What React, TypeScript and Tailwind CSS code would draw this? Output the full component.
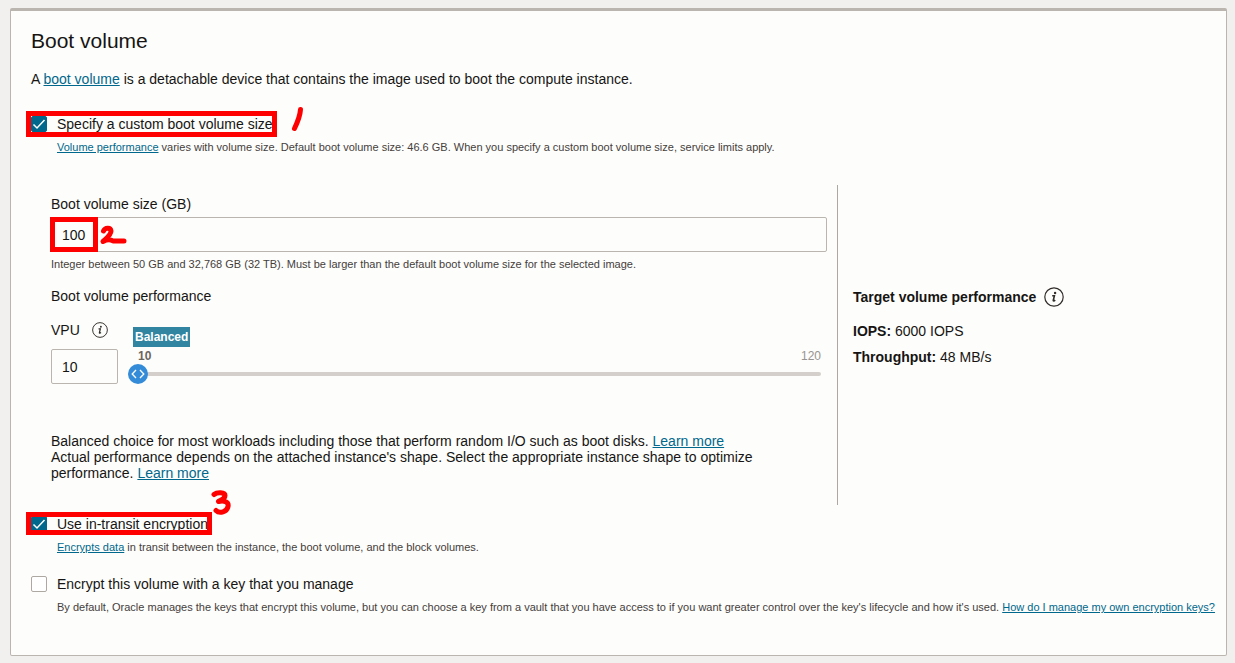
import { useState, type ReactNode } from "react";

function TextLink({ children }: { children: ReactNode }) {
  return (
    <a href="#" className="text-[#00688c] underline underline-offset-1">
      {children}
    </a>
  );
}

function InfoButton({ label, className }: { label: string; className: string }) {
  return (
    <button type="button" aria-label={label} className="shrink-0 text-[#312d2a]">
      <svg viewBox="0 0 20 20" className={className} fill="none" stroke="currentColor">
        <circle cx="10" cy="10" r="9.2" strokeWidth="1.2" />
        <circle cx="11.100" cy="6" r="1.2" fill="currentColor" stroke="none" />
        <path d="M8.200 8.700h2.200L9.300 13.300c-.2.9.7.9 1.900-.2" strokeWidth="1.6" />
      </svg>
    </button>
  );
}

/** Red frame drawn over a control. */
function Frame({ className }: { className: string }) {
  return <span className={`pointer-events-none absolute border-5 border-[#fe0000] ${className}`} />;
}

/** Handwritten red mark. */
function Mark({ d, className }: { d: string; className: string }) {
  return (
    <svg
      viewBox="0 0 30 32"
      className={`pointer-events-none absolute h-8 w-[30px] ${className}`}
      fill="none"
      stroke="#fe0000"
      strokeWidth="5"
      strokeLinecap="round"
      strokeLinejoin="round"
    >
      <path d={d} />
    </svg>
  );
}

type CheckOptionProps = {
  id: string;
  label: string;
  defaultChecked?: boolean;
  hint: ReactNode;
  children?: ReactNode;
};

function CheckOption({ id, label, defaultChecked, hint, children }: CheckOptionProps) {
  return (
    <div>
      <div className="relative flex w-fit items-center gap-2.5">
        <span className="relative h-4 w-4">
          <input
            id={id}
            type="checkbox"
            defaultChecked={defaultChecked}
            className="peer block h-4 w-4 appearance-none rounded-xs border border-[#aea8a2] bg-white checked:border-[#00688c] checked:bg-[#00688c]"
          />
          <svg
            viewBox="0 0 16 16"
            className="pointer-events-none absolute inset-0 hidden h-4 w-4 peer-checked:block"
            fill="none"
            stroke="white"
            strokeWidth="1.5"
          >
            <path d="M2.500 8.500 6 12l7.500-8" />
          </svg>
        </span>
        <label htmlFor={id} className="leading-5">
          {label}
        </label>
        {children}
      </div>
      <p className="mt-[5px] pl-[26px] text-[11px] leading-4 text-[#45403c]">{hint}</p>
    </div>
  );
}

function VpuSlider({ value, onChange }: { value: number; onChange: (value: number) => void }) {
  const pct = (value - 10) / 110;
  return (
    <div className="min-w-0 flex-1 pr-1.5">
      <span className="ml-[5px] block w-fit bg-[#3285a1] px-0.5 text-xs leading-5 font-bold text-white">
        Balanced
      </span>
      <div className="mt-px flex justify-between pl-2.5 text-xs leading-4">
        <span className="font-bold text-[#6b6560]">10</span>
        <span className="text-[#989490]">120</span>
      </div>
      <div className="relative h-5">
        <input
          type="range"
          aria-label="VPU"
          min={10}
          max={120}
          step={10}
          value={value}
          onChange={(e) => onChange(Number(e.target.value))}
          className="block h-5 w-full appearance-none bg-transparent [&::-webkit-slider-runnable-track]:h-1 [&::-webkit-slider-runnable-track]:rounded-xs [&::-webkit-slider-runnable-track]:bg-[#d4cfca] [&::-webkit-slider-thumb]:-mt-2 [&::-webkit-slider-thumb]:h-5 [&::-webkit-slider-thumb]:w-5 [&::-webkit-slider-thumb]:appearance-none [&::-webkit-slider-thumb]:rounded-full [&::-webkit-slider-thumb]:bg-[#348cd9]"
        />
        <svg
          viewBox="0 0 20 20"
          className="pointer-events-none absolute top-0 h-5 w-5"
          style={{ left: `calc(${pct} * (100% - 20px))` }}
          fill="none"
          stroke="white"
          strokeWidth="1.3"
        >
          <path d="M8 6 4.200 10 8 14M12 6l3.800 4L12 14" />
        </svg>
      </div>
    </div>
  );
}

export default function App() {
  const [size, setSize] = useState("100");
  const [vpu, setVpu] = useState(10);

  return (
    <div className="min-h-screen bg-[#f2f0ef] pt-2 pr-2 pb-[7px] pl-2.5 font-['Liberation_Sans',Arial,sans-serif] text-sm text-[#161513]">
      <section className="rounded-xs border border-t-3 border-[#bbb5b0] bg-[#fdfdfb] pt-4 pr-2 pb-10 pl-5">
        <h1 className="text-[21px] leading-7">Boot volume</h1>
        <p className="mt-3.5 leading-5">
          A <TextLink>boot volume</TextLink> is a detachable device that contains the image used to boot the compute
          instance.
        </p>

        <div className="mt-[25px]">
          <CheckOption
            id="custom-size"
            label="Specify a custom boot volume size"
            defaultChecked
            hint={
              <>
                <TextLink>Volume performance</TextLink> varies with volume size. Default boot volume size: 46.6 GB. When
                you specify a custom boot volume size, service limits apply.
              </>
            }
          >
            <Frame className="-top-[3px] -right-1 -bottom-[3px] -left-[5px]" />
            <Mark className="-top-2.5 left-full ml-3" d="M15.500 5.500Q15 13 9.500 24.500" />
          </CheckOption>
        </div>

        <div className="mt-[30px] flex">
          <div className="min-w-0 flex-1 pt-[9px] pr-2.5 pb-6 pl-5">
            <label htmlFor="volume-size" className="block leading-5">
              Boot volume size (GB)
            </label>
            <div className="relative mt-[3px]">
              <input
                id="volume-size"
                type="text"
                value={size}
                onChange={(e) => setSize(e.target.value)}
                className="block h-[35px] w-full rounded-xs border border-[#bbb5b0] bg-[#fdfdfb] px-2.5"
              />
              <Frame className="top-0 -left-px h-[35px] w-12" />
              <Mark className="top-0 left-12" d="M4.500 14C6 10.500 11.500 10 12 14C12 18 8 21 4 24.500C8 22.500 11 22 14 24H25" />
            </div>
            <p className="mt-1 text-[11px] leading-4 text-[#45403c]">
              Integer between 50 GB and 32,768 GB (32 TB). Must be larger than the default boot volume size for the
              selected image.
            </p>

            <h2 className="mt-3.5 leading-5">Boot volume performance</h2>
            <div className="mt-3.5 flex items-end gap-2.5">
              <div>
                <div className="flex h-5 items-center gap-3">
                  <label htmlFor="vpu">VPU</label>
                  <InfoButton label="About VPU" className="h-4 w-4" />
                </div>
                <input
                  id="vpu"
                  type="text"
                  value={vpu}
                  onChange={(e) => setVpu(Number(e.target.value) || 10)}
                  className="mt-[9px] block h-[35px] w-[67px] rounded-xs border border-[#bbb5b0] bg-[#fdfdfb] px-2.5"
                />
              </div>
              <VpuSlider value={vpu} onChange={setVpu} />
            </div>

            <div className="mt-[49px] leading-4">
              <p>
                Balanced choice for most workloads including those that perform random I/O such as boot disks.{" "}
                <TextLink>Learn more</TextLink>
              </p>
              <p>
                Actual performance depends on the attached instance's shape. Select the appropriate instance shape to
                optimize performance. <TextLink>Learn more</TextLink>
              </p>
            </div>
          </div>

          <aside className="w-[381px] shrink-0 border-l border-[#aea8a2] pt-[102px] pl-[15px]">
            <div className="flex h-5 items-center gap-2">
              <h2 className="font-bold">Target volume performance</h2>
              <InfoButton label="About target volume performance" className="h-5 w-5" />
            </div>
            <p className="mt-3.5 leading-5">
              <strong>IOPS:</strong> 6000 IOPS
            </p>
            <p className="mt-1.5 leading-5">
              <strong>Throughput:</strong> 48 MB/s
            </p>
          </aside>
        </div>

        <div className="mt-[9px] flex flex-col gap-[19px]">
          <CheckOption
            id="in-transit"
            label="Use in-transit encryption"
            defaultChecked
            hint={
              <>
                <TextLink>Encrypts data</TextLink> in transit between the instance, the boot volume, and the block
                volumes.
              </>
            }
          >
            <Frame className="-top-0.5 -right-1 -bottom-px -left-[5px]" />
            <Mark
              className="-top-7 left-full"
              d="M6 8.500C9 6 17 6 17 9.500C17 13 13 14 10.500 15.500C16 14 21 16 20 20.500C19 26 11.500 28 8 24.500"
            />
          </CheckOption>
          <CheckOption
            id="own-key"
            label="Encrypt this volume with a key that you manage"
            hint={
              <>
                By default, Oracle manages the keys that encrypt this volume, but you can choose a key from a vault that
                you have access to if you want greater control over the key's lifecycle and how it's used.{" "}
                <TextLink>How do I manage my own encryption keys?</TextLink>
              </>
            }
          />
        </div>
      </section>
    </div>
  );
}
